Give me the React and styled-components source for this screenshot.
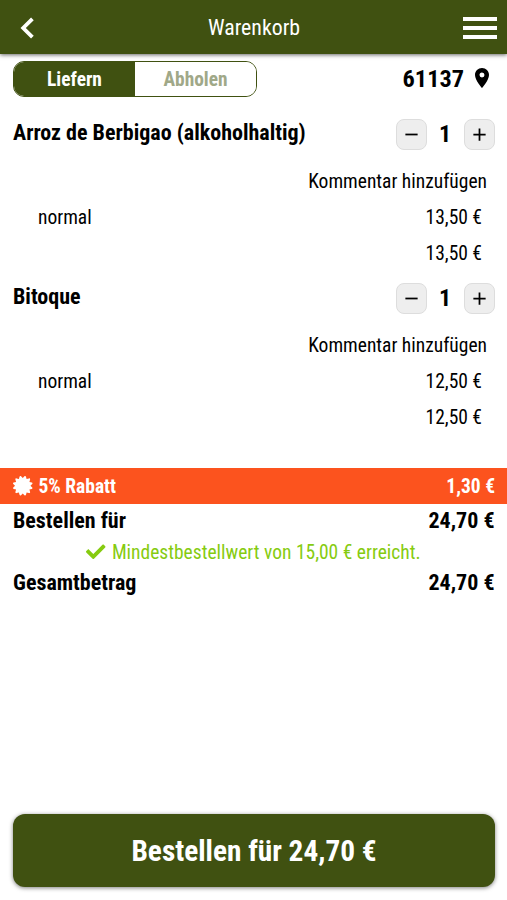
import React from "react";

import { FaCertificate, FaCheck } from "react-icons/fa";
import { MdAdd, MdLocationOn, MdRemove } from "react-icons/md";

import styled, { createGlobalStyle, ThemeProvider } from "styled-components";

const theme = {
  primary: "#405111",
  discount: "#fc531e",
  success: "#86cb10",
};

const items = [
  { name: "Arroz de Berbigao (alkoholhaltig)", variant: "normal", price: "13,50 €" },
  { name: "Bitoque", variant: "normal", price: "12,50 €" },
];

// --- Components --- //

const CartItem = ({ name, variant, price }) => (
  <StyledItem>
    <StyledItemHead>
      <h2>{name}</h2>
      <StyledStepper>
        <StyledStepButton aria-label="Weniger">
          <MdRemove />
        </StyledStepButton>
        <span>1</span>
        <StyledStepButton aria-label="Mehr">
          <MdAdd />
        </StyledStepButton>
      </StyledStepper>
    </StyledItemHead>
    <StyledComment>Kommentar hinzufügen</StyledComment>
    <StyledItemRow>
      <span>{variant}</span>
      <span>{price}</span>
    </StyledItemRow>
    <StyledItemRow>
      <span />
      <span>{price}</span>
    </StyledItemRow>
  </StyledItem>
);

const App = () => {
  return (
    <ThemeProvider theme={theme}>
      <GlobalStyle />
      <StyledPage>
        <StyledHeader>
          <StyledBack aria-label="Zurück">
            <svg width="14" height="22" viewBox="0 0 14 22" fill="none">
              <path d="M12.4 1.8L3.2 11l9.2 9.2" stroke="white" strokeWidth="3.8" />
            </svg>
          </StyledBack>
          <h1>Warenkorb</h1>
          <StyledBurger aria-label="Menü">
            <span />
            <span />
            <span />
          </StyledBurger>
        </StyledHeader>
        <StyledDelivery>
          <StyledToggle>
            <StyledOption $active>Liefern</StyledOption>
            <StyledOption>Abholen</StyledOption>
          </StyledToggle>
          <StyledPostcode>
            61137
            <MdLocationOn />
          </StyledPostcode>
        </StyledDelivery>
        <StyledItems>
          {items.map((item) => (
            <CartItem key={item.name} {...item} />
          ))}
        </StyledItems>
        <StyledDiscount>
          <span>
            <FaCertificate />
            5% Rabatt
          </span>
          <span>1,30 €</span>
        </StyledDiscount>
        <StyledTotal>
          <span>Bestellen für</span>
          <span>24,70 €</span>
        </StyledTotal>
        <StyledMinimum>
          <FaCheck />
          Mindestbestellwert von 15,00 € erreicht.
        </StyledMinimum>
        <StyledTotal>
          <span>Gesamtbetrag</span>
          <span>24,70 €</span>
        </StyledTotal>
        <StyledOrder>Bestellen für 24,70 €</StyledOrder>
      </StyledPage>
    </ThemeProvider>
  );
};

export default App;

// --- Styles --- //

const GlobalStyle = createGlobalStyle`
  * {
    box-sizing: border-box;
  }
  body {
    margin: 0;
    background-color: white;
  }
  body, button {
    font-family: "Roboto Condensed", Roboto, sans-serif;
    font-stretch: 75%;
  }
  h1, h2 {
    margin: 0;
  }
  button {
    border: none;
    padding: 0;
    background: none;
  }
`;

const StyledPage = styled.main`
  height: 900px;
  display: flex;
  flex-direction: column;
  color: black;
  font-size: 19.5px;
  font-weight: 450;
  white-space: nowrap;
`;

const StyledHeader = styled.header`
  height: 54px;
  flex-shrink: 0;
  padding: 2px 10px 0 20px;
  display: grid;
  grid-template-columns: 14px 1fr 34px;
  align-items: center;
  color: white;
  background-color: ${(props) => props.theme.primary};
  box-shadow: 0 1px 4px rgba(0, 0, 0, 0.6);
  h1 {
    padding: 0 0 2px 11px;
    text-align: center;
    font-size: 21.8px;
    font-weight: 450;
  }
`;

const StyledBack = styled.button`
  display: flex;
`;

const StyledBurger = styled.button`
  display: flex;
  flex-direction: column;
  gap: 5px;
  span {
    height: 4px;
    background-color: white;
  }
`;

const StyledDelivery = styled.div`
  height: 50px;
  padding: 7px 13px 0;
  display: flex;
  align-items: flex-start;
  justify-content: space-between;
`;

const StyledToggle = styled.div`
  width: 244px;
  height: 36px;
  display: flex;
  border: 1px solid ${(props) => props.theme.primary};
  border-radius: 11px;
  overflow: hidden;
`;

const StyledOption = styled.button`
  flex: 1;
  font-size: 19.4px;
  font-weight: 700;
  color: ${(props) => (props.$active ? "white" : "#a0a888")};
  background-color: ${(props) =>
    props.$active ? props.theme.primary : "white"};
`;

const StyledPostcode = styled.div`
  height: 34px;
  display: flex;
  align-items: center;
  font-size: 24.3px;
  font-weight: 700;
  svg {
    margin-left: 6px;
    width: 24px;
    height: 24px;
  }
`;

const StyledItems = styled.section`
  height: 364px;
  padding: 0 13px;
`;

const StyledItem = styled.article`
  padding-top: 12px;
  height: 164px;
`;

const StyledItemHead = styled.div`
  height: 36px;
  display: flex;
  justify-content: space-between;
  h2 {
    font-size: 22px;
    font-weight: 700;
    line-height: 33px;
  }
`;

const StyledStepper = styled.div`
  height: 36px;
  display: flex;
  align-items: center;
  font-size: 24px;
  font-weight: 700;
  margin-right: -0.5px;
  span {
    width: 37px;
    text-align: center;
  }
`;

const StyledStepButton = styled.button`
  width: 31px;
  height: 31px;
  display: flex;
  align-items: center;
  justify-content: center;
  font-size: 21px;
  color: black;
  background-color: #eee;
  border: 1px solid #ddd;
  border-radius: 8px;
`;

const StyledComment = styled.div`
  height: 47px;
  padding: 11px 7px 0;
  line-height: 37px;
  text-align: right;
`;

const StyledItemRow = styled.div`
  height: 36px;
  padding: 0 12px 0 25px;
  display: flex;
  align-items: center;
  justify-content: space-between;
`;

const StyledDiscount = styled.div`
  height: 36px;
  padding: 0 12px 0 13px;
  display: flex;
  align-items: center;
  justify-content: space-between;
  color: white;
  font-weight: 700;
  background-color: ${(props) => props.theme.discount};
  span {
    display: flex;
    align-items: center;
  }
  svg {
    margin-right: 6px;
  }
`;

const StyledTotal = styled.div`
  height: 34px;
  padding: 0 12.5px 1px 13px;
  display: flex;
  align-items: center;
  justify-content: space-between;
  font-size: 22px;
  font-weight: 700;
`;

const StyledMinimum = styled.div`
  height: 28px;
  display: flex;
  align-items: center;
  justify-content: center;
  font-weight: 400;
  color: ${(props) => props.theme.success};
  svg {
    margin-right: 6px;
  }
`;

const StyledOrder = styled.button`
  height: 73px;
  margin: auto 12px 13px 13px;
  color: white;
  font-size: 29.3px;
  font-weight: 750;
  background-color: ${(props) => props.theme.primary};
  border-radius: 12px;
  box-shadow: 0 1px 4px rgba(0, 0, 0, 0.5);
`;
